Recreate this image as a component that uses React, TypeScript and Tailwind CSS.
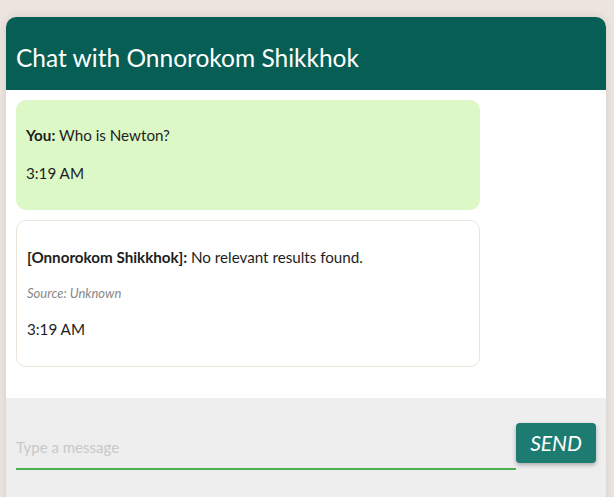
import React from "react";

export default function App() {
  return (
    <div className="min-h-[497px] bg-[#ece4de] pt-[17px] px-[6px] overflow-hidden" style={{ fontFamily: 'Lato, "Noto Sans", sans-serif' }}>
      <div className="w-[600px] rounded-t-[10px] overflow-hidden bg-white shadow-[0_0_10px_rgba(0,0,0,0.1)]">
        <div className="h-[73px] bg-[#075e54] flex items-center px-[10px]">
          <h1 className="text-[24.5px] text-white font-normal leading-none pt-[10px]">Chat with Onnorokom Shikkhok</h1>
        </div>
        <div className="h-[308px] p-[10px] flex flex-col gap-[10px] bg-white">
          <div className="max-w-[80%] w-[464px] rounded-[10px] bg-[#dcf8c6] px-[10px] py-[10px] text-[15.2px] text-[#1e1e1e]">
            <p className="my-[14px] leading-[22px]"><strong className="font-bold">You:</strong> Who is Newton?</p>
            <p className="my-[16px] leading-[22px]">3:19 AM</p>
          </div>
          <div className="max-w-[80%] w-[464px] rounded-[10px] bg-white border border-[#ece4da] px-[10px] py-[10px] text-[15.2px] text-[#1e1e1e]">
            <p className="my-[15px] leading-[22px]"><strong className="font-bold">[Onnorokom Shikkhok]:</strong> No relevant results found.</p>
            <p className="my-[16px] leading-[18px] text-[13px] italic text-[#888]">Source: Unknown</p>
            <p className="mt-[16px] mb-[16px] leading-[22px]">3:19 AM</p>
          </div>
        </div>
        <div className="h-[110px] bg-[#eeeeee] flex items-start px-[10px] pt-[25px]">
          <div className="flex-1 h-[47px] flex items-end border-b-2 border-[#4caf50]">
            <input placeholder="Type a message" className="w-full bg-transparent outline-none text-[15px] pb-[10px] placeholder:text-[#c8c8c8]" />
          </div>
          <button className="w-[80px] h-[40px] rounded-[4px] bg-[#1c7c71] text-white italic text-[21px] shadow-[0_2px_4px_rgba(0,0,0,0.3)]">SEND</button>
        </div>
      </div>
    </div>
  );
}
